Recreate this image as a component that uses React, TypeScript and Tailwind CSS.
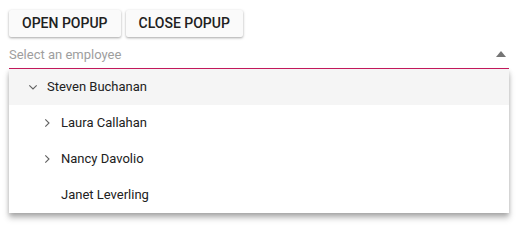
import React from "react";

const Chevron = ({ dir }: { dir: "down" | "right" }) => (
  <svg width="12" height="12" viewBox="0 0 12 12" className="shrink-0">
    {dir === "down" ? (
      <path d="M2.3 4.3 L6 8 L9.7 4.3" fill="none" stroke="#616161" strokeWidth="1.1" />
    ) : (
      <path d="M4.3 2.3 L8 6 L4.3 9.7" fill="none" stroke="#616161" strokeWidth="1.1" />
    )}
  </svg>
);

export default function App() {
  return (
    <div className="w-[523px] h-[230px] bg-white relative" style={{ fontFamily: "Roboto, 'Liberation Sans', sans-serif" }}>
      <div className="flex gap-[5px] pl-[9px] pt-[10px]">
        <button className="h-[27px] px-[13px] bg-[#fafafa] text-[14px] font-medium text-[#212121] rounded-[2px] shadow-[0_1px_3px_rgba(0,0,0,0.25),0_1px_2px_rgba(0,0,0,0.12)]">
          OPEN POPUP
        </button>
        <button className="h-[27px] px-[13px] bg-[#fafafa] text-[14px] font-medium text-[#212121] rounded-[2px] shadow-[0_1px_3px_rgba(0,0,0,0.25),0_1px_2px_rgba(0,0,0,0.12)]">
          CLOSE POPUP
        </button>
      </div>
      <div className="ml-[9px] w-[500px] mt-[5px] relative z-10">
        <div className="h-[26px] flex items-center justify-between">
          <span className="text-[13px] text-[#9e9e9e] mb-[1px]">Select an employee</span>
          <svg width="10" height="6" viewBox="0 0 10 6" className="mr-[3px] mb-[3px]">
            <path d="M0 6 L5 0 L10 6 Z" fill="#757575" />
          </svg>
        </div>
        <div className="h-[1px] bg-[#c2185b]" />
      </div>
      <div className="ml-[9px] w-[500px] bg-white shadow-[0_5px_6px_rgba(0,0,0,0.25),0_2px_4px_rgba(0,0,0,0.15)] text-[13px] text-[#212121]">
        <div className="h-[36px] flex items-center bg-[#f5f5f5] pl-[18px]">
          <Chevron dir="down" />
          <span className="ml-[8px]">Steven Buchanan</span>
        </div>
        <div className="h-[36px] flex items-center pl-[32px]">
          <Chevron dir="right" />
          <span className="ml-[8px]">Laura Callahan</span>
        </div>
        <div className="h-[36px] flex items-center pl-[32px]">
          <Chevron dir="right" />
          <span className="ml-[8px]">Nancy Davolio</span>
        </div>
        <div className="h-[36px] flex items-center pl-[52px]">
          <span>Janet Leverling</span>
        </div>
      </div>
    </div>
  );
}
